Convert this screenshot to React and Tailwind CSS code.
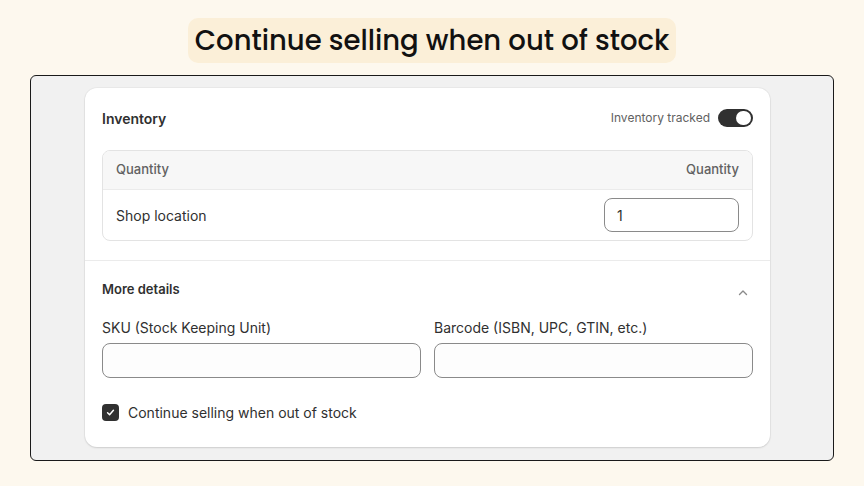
import React from "react";

const inter = { fontFamily: "Inter, 'Noto Sans', sans-serif" };

export default function App() {
  return (
    <div
      className="w-[864px] h-[486px] bg-[#fdf8ee] flex flex-col items-center pt-[18px] overflow-hidden"
      style={inter}
    >
      <div
        className="h-[45px] px-[8px] rounded-[10px] bg-[#fbefd8] flex items-center justify-center w-[488px]"
        style={{ fontFamily: "Poppins, 'Open Sans', Lato, sans-serif" }}
      >
        <span className="text-[27.5px] font-medium text-[#111] whitespace-nowrap">
          Continue selling when out of stock
        </span>
      </div>

      <div className="mt-[12px] w-[804px] h-[386px] border border-[#1a1a1a] rounded-[6px] bg-[#f1f1f1] pt-[12px] pl-[54px]">
        <div className="w-[685px] bg-white rounded-[12px] shadow-[0_1px_2px_rgba(0,0,0,0.12),0_0_0_1px_rgba(0,0,0,0.03)]">
          <div className="px-[17px] pt-[20px] pb-[19px]">
            <div className="h-[20px] flex items-center justify-between">
              <span className="text-[14px] font-semibold text-[#303030]">Inventory</span>
              <div className="flex items-center gap-[8px]">
                <span className="text-[12px] text-[#616161]">Inventory tracked</span>
                <div className="w-[35px] h-[18px] rounded-full bg-[#303030] flex items-center justify-end pr-[2px]">
                  <div className="w-[15px] h-[14px] rounded-full bg-white" />
                </div>
              </div>
            </div>

            <div className="mt-[22px] border border-[#e3e3e3] rounded-[8px] overflow-hidden">
              <div className="h-[39px] bg-[#f7f7f7] border-b border-[#ebebeb] flex items-center justify-between px-[13px]">
                <span className="text-[13px] font-medium text-[#616161]">Quantity</span>
                <span className="text-[13px] font-medium text-[#616161]">Quantity</span>
              </div>
              <div className="h-[50px] flex items-center justify-between pl-[13px] pr-[13px]">
                <span className="text-[14px] text-[#303030]">Shop location</span>
                <div className="w-[135px] h-[34px] border border-[#8a8a8a] rounded-[8px] flex items-center px-[12px] text-[14px] text-[#303030]">
                  1
                </div>
              </div>
            </div>
          </div>

          <div className="h-px bg-[#ebebeb]" />

          <div className="px-[17px] pt-[18px] pb-[25px]">
            <div className="h-[20px] flex items-center justify-between">
              <span className="text-[13px] font-semibold text-[#303030] pt-[2px]">More details</span>
              <svg width="12" height="12" viewBox="0 0 12 12" className="mt-[8px] mr-[4px]">
                <path d="M2.5 7.5 L6 4 L9.5 7.5" fill="none" stroke="#8a8a8a" strokeWidth="1.4" strokeLinecap="round" strokeLinejoin="round" />
              </svg>
            </div>

            <div className="mt-[18px] grid grid-cols-2 gap-[13px]">
              <div>
                <div className="h-[20px] flex items-center text-[14px] text-[#303030] pt-[1px]">SKU (Stock Keeping Unit)</div>
                <div className="mt-[6px] h-[35px] border border-[#8a8a8a] rounded-[8px] bg-[#fdfdfd]" />
              </div>
              <div>
                <div className="h-[20px] flex items-center text-[14px] text-[#303030] pt-[1px]">Barcode (ISBN, UPC, GTIN, etc.)</div>
                <div className="mt-[6px] h-[35px] border border-[#8a8a8a] rounded-[8px] bg-[#fdfdfd]" />
              </div>
            </div>

            <div className="mt-[24px] h-[20px] flex items-center gap-[9px]">
              <div className="w-[17px] h-[17px] rounded-[4px] bg-[#303030] flex items-center justify-center">
                <svg width="11" height="11" viewBox="0 0 12 12">
                  <path d="M2.8 6.3 L5 8.4 L9.2 3.6" fill="none" stroke="white" strokeWidth="1.6" strokeLinecap="round" strokeLinejoin="round" />
                </svg>
              </div>
              <span className="text-[14px] text-[#303030] pt-[1px]">Continue selling when out of stock</span>
            </div>
          </div>
        </div>
      </div>
    </div>
  );
}
